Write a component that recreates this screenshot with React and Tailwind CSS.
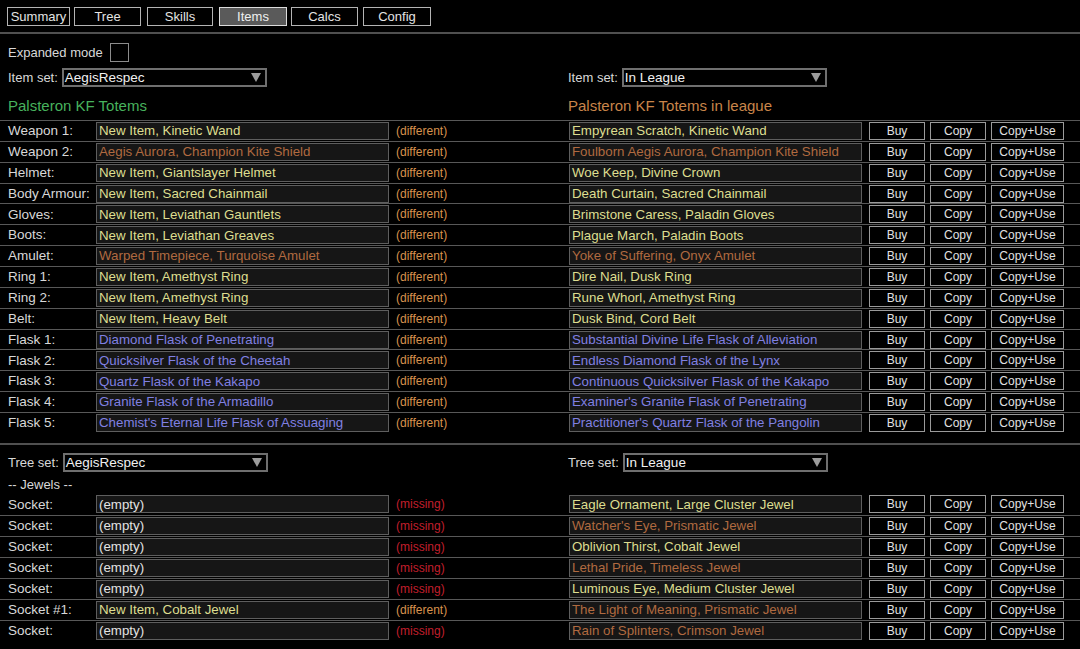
import React from "react";

const COLORS = {
  rare: "text-[#dede90]",
  unique: "text-[#b06a40]",
  magic: "text-[#8080e2]",
  normal: "text-[#e2e2e2]",
};

const items = [
  ["Weapon 1:", "New Item, Kinetic Wand", "rare", "Empyrean Scratch, Kinetic Wand", "rare"],
  ["Weapon 2:", "Aegis Aurora, Champion Kite Shield", "unique", "Foulborn Aegis Aurora, Champion Kite Shield", "unique"],
  ["Helmet:", "New Item, Giantslayer Helmet", "rare", "Woe Keep, Divine Crown", "rare"],
  ["Body Armour:", "New Item, Sacred Chainmail", "rare", "Death Curtain, Sacred Chainmail", "rare"],
  ["Gloves:", "New Item, Leviathan Gauntlets", "rare", "Brimstone Caress, Paladin Gloves", "rare"],
  ["Boots:", "New Item, Leviathan Greaves", "rare", "Plague March, Paladin Boots", "rare"],
  ["Amulet:", "Warped Timepiece, Turquoise Amulet", "unique", "Yoke of Suffering, Onyx Amulet", "unique"],
  ["Ring 1:", "New Item, Amethyst Ring", "rare", "Dire Nail, Dusk Ring", "rare"],
  ["Ring 2:", "New Item, Amethyst Ring", "rare", "Rune Whorl, Amethyst Ring", "rare"],
  ["Belt:", "New Item, Heavy Belt", "rare", "Dusk Bind, Cord Belt", "rare"],
  ["Flask 1:", "Diamond Flask of Penetrating", "magic", "Substantial Divine Life Flask of Alleviation", "magic"],
  ["Flask 2:", "Quicksilver Flask of the Cheetah", "magic", "Endless Diamond Flask of the Lynx", "magic"],
  ["Flask 3:", "Quartz Flask of the Kakapo", "magic", "Continuous Quicksilver Flask of the Kakapo", "magic"],
  ["Flask 4:", "Granite Flask of the Armadillo", "magic", "Examiner's Granite Flask of Penetrating", "magic"],
  ["Flask 5:", "Chemist's Eternal Life Flask of Assuaging", "magic", "Practitioner's Quartz Flask of the Pangolin", "magic"],
];

const jewels = [
  ["Socket:", "(empty)", "normal", "missing", "Eagle Ornament, Large Cluster Jewel", "rare"],
  ["Socket:", "(empty)", "normal", "missing", "Watcher's Eye, Prismatic Jewel", "unique"],
  ["Socket:", "(empty)", "normal", "missing", "Oblivion Thirst, Cobalt Jewel", "rare"],
  ["Socket:", "(empty)", "normal", "missing", "Lethal Pride, Timeless Jewel", "unique"],
  ["Socket:", "(empty)", "normal", "missing", "Luminous Eye, Medium Cluster Jewel", "rare"],
  ["Socket #1:", "New Item, Cobalt Jewel", "rare", "different", "The Light of Meaning, Prismatic Jewel", "unique"],
  ["Socket:", "(empty)", "normal", "missing", "Rain of Splinters, Crimson Jewel", "unique"],
];

function Box({ text, kind }) {
  return (
    <div
      className={`w-[293px] h-[18px] shrink-0 bg-[#161616] border border-[#5e5e5e] flex items-center pl-[2px] text-[13.3px] leading-none whitespace-nowrap overflow-hidden ${COLORS[kind]}`}
    >
      {text}
    </div>
  );
}

function Btn({ label, w }) {
  return (
    <div
      className={`${w} h-[18px] shrink-0 bg-black border border-[#9a9a9a] flex items-center justify-center text-[12px] leading-none text-[#e2e2e2]`}
    >
      {label}
    </div>
  );
}

function Row({ label, left, leftKind, status, right, rightKind, first, h }) {
  return (
    <div
      className={`flex items-center pl-[8px] ${h} ${first ? "" : "border-t border-[#585858]"}`}
    >
      <div className="w-[88px] shrink-0 text-[13.5px] leading-none text-[#d8d8d8] whitespace-nowrap">{label}</div>
      <Box text={left} kind={leftKind} />
      <div
        className={`w-[180px] shrink-0 pl-[7px] text-[12px] leading-none ${
          status === "missing" ? "text-[#c21f2c]" : "text-[#d8924e]"
        }`}
      >
        ({status})
      </div>
      <Box text={right} kind={rightKind} />
      <div className="flex ml-[7px] gap-[5px]">
        <Btn label="Buy" w="w-[56px]" />
        <Btn label="Copy" w="w-[56px]" />
        <Btn label="Copy+Use" w="w-[73px]" />
      </div>
    </div>
  );
}

function Dropdown({ value }) {
  return (
    <div className="w-[205px] h-[19px] shrink-0 bg-black border-2 border-[#6f6f6f] flex items-center pl-[1px] text-[13.5px] leading-none text-[#f0f0f0]">
      <span>{value}</span>
      <svg className="ml-auto mr-[4px]" width="10" height="9" viewBox="0 0 10 9">
        <polygon points="0,0 10,0 5,9" fill="#9c9c9c" />
      </svg>
    </div>
  );
}

function Tab({ label, w, ml, active }) {
  return (
    <div
      className={`${w} ${ml} h-[19px] shrink-0 flex items-center justify-center text-[13px] leading-none border ${
        active ? "bg-[#5a5a5a] border-[#dcdcdc] text-[#f0f0f0]" : "bg-black border-[#b4b4b4] text-[#e4e4e4]"
      }`}
    >
      {label}
    </div>
  );
}

export default function App() {
  return (
    <div className="w-[1080px] h-[649px] bg-black overflow-hidden font-['Liberation_Sans',Arial,sans-serif] text-[#dedede]">
      <div className="flex pt-[7px] pl-[7px]">
        <Tab label="Summary" w="w-[63px]" ml="" />
        <Tab label="Tree" w="w-[67px]" ml="ml-[4px]" />
        <Tab label="Skills" w="w-[66px]" ml="ml-[6px]" />
        <Tab label="Items" w="w-[68px]" ml="ml-[6px]" active />
        <Tab label="Calcs" w="w-[67px]" ml="ml-[4px]" />
        <Tab label="Config" w="w-[68px]" ml="ml-[5px]" />
      </div>
      <div className="mt-[6px] h-[2px] bg-[#505050]" />

      <div className="mt-[9px] h-[19px] flex items-center pl-[8px]">
        <span className="text-[13px] leading-none text-[#d8d8d8]">Expanded mode</span>
        <div className="ml-[7px] w-[19px] h-[19px] border border-[#8c8c8c] bg-black" />
      </div>

      <div className="mt-[6px] flex items-center">
        <div className="w-[568px] pl-[8px] flex items-center">
          <span className="text-[13px] leading-none text-[#d8d8d8] mr-[4px]">Item set:</span>
          <Dropdown value="AegisRespec" />
        </div>
        <div className="flex items-center">
          <span className="text-[13px] leading-none text-[#d8d8d8] mr-[4px]">Item set:</span>
          <Dropdown value="In League" />
        </div>
      </div>

      <div className="mt-[10px] h-[17px] flex items-center text-[15px] leading-none">
        <div className="w-[568px] pl-[8px] text-[#47b25d]">Palsteron KF Totems</div>
        <div className="text-[#c9854a]">Palsteron KF Totems in league</div>
      </div>

      <div className="mt-[6px]">
        {items.map((r, i) => (
          <Row
            key={i}
            h="h-[20.86px]"
            label={r[0]}
            left={r[1]}
            leftKind={r[2]}
            status="different"
            right={r[3]}
            rightKind={r[4]}
          />
        ))}
      </div>

      <div className="mt-[10px] h-[2px] bg-[#505050]" />

      <div className="mt-[8px] flex items-center">
        <div className="w-[568px] pl-[8px] flex items-center">
          <span className="text-[13px] leading-none text-[#d8d8d8] mr-[4px]">Tree set:</span>
          <Dropdown value="AegisRespec" />
        </div>
        <div className="flex items-center">
          <span className="text-[13px] leading-none text-[#d8d8d8] mr-[4px]">Tree set:</span>
          <Dropdown value="In League" />
        </div>
      </div>

      <div className="mt-[4px] h-[17px] flex items-center pl-[8px] text-[13px] leading-none text-[#d8d8d8]">
        -- Jewels --
      </div>

      <div className="mt-[1px]">
        {jewels.map((r, i) => (
          <Row
            key={i}
            h="h-[21px]"
            first={i === 0}
            label={r[0]}
            left={r[1]}
            leftKind={r[2]}
            status={r[3]}
            right={r[4]}
            rightKind={r[5]}
          />
        ))}
      </div>
    </div>
  );
}
